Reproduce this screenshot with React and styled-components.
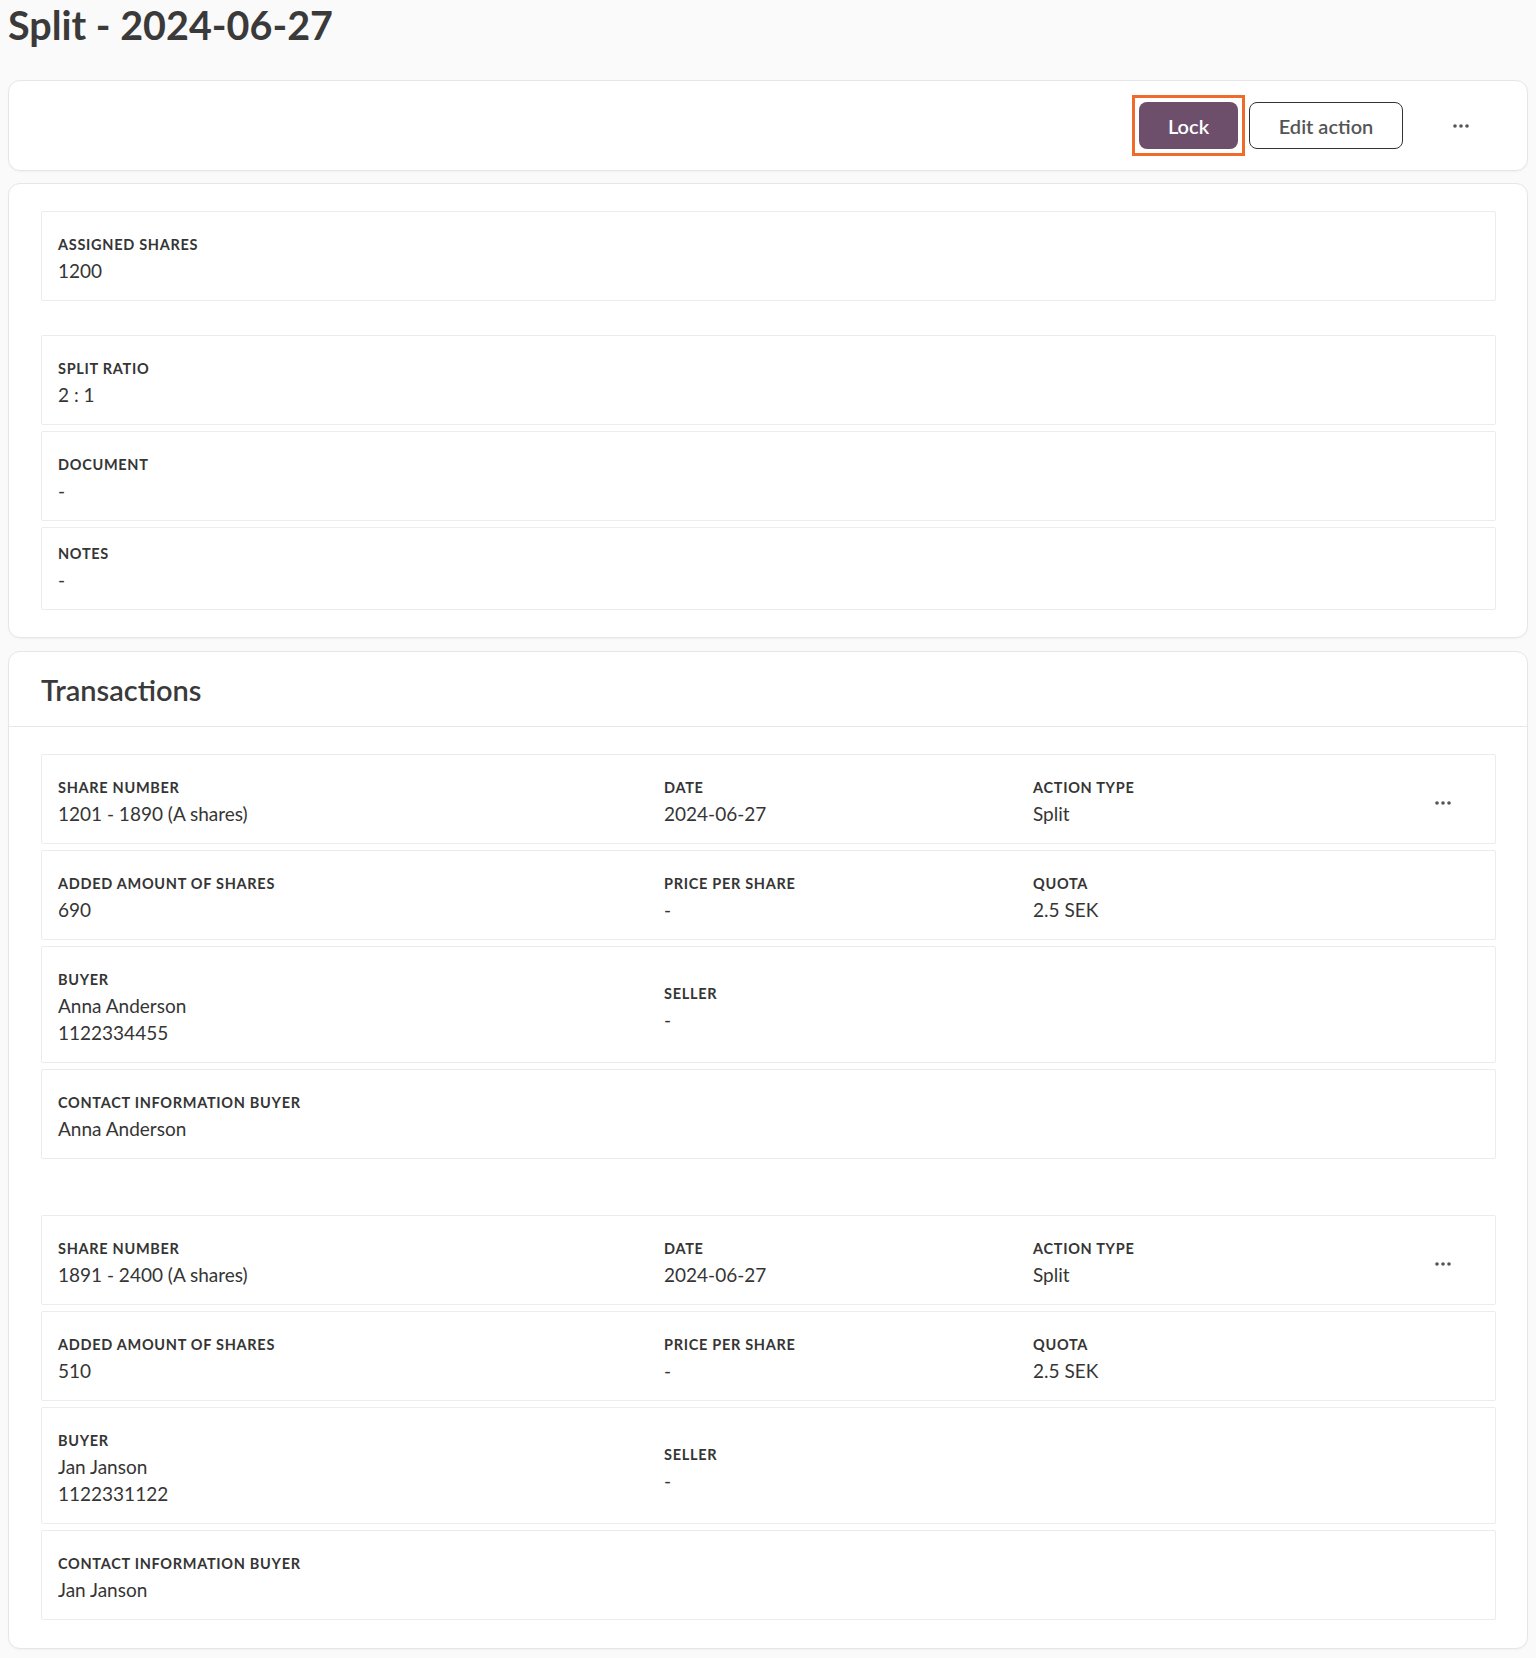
import React from "react";
import styled, { createGlobalStyle } from "styled-components";

const GlobalStyle = createGlobalStyle`
  body {
    margin: 0;
    background: #fafafa;
    font-family: Lato, "Open Sans", sans-serif;
    color: #353535;
  }
`;

const Page = styled.div`
  padding: 0 8px 4px 8px;
`;

const Title = styled.h1`
  margin: 0;
  padding-top: 1px;
  font-size: 39.5px;
  line-height: 48px;
  font-weight: 700;
  color: #3a3a3a;
`;

const Card = styled.div`
  background: #fff;
  border: 1px solid #e6e6e6;
  border-radius: 12px;
  box-shadow: 0 1px 2px rgba(0, 0, 0, 0.04);
  margin-top: ${props => props.gap || 12}px;
`;

const Toolbar = styled(Card)`
  height: 89px;
  display: flex;
  align-items: center;
  justify-content: flex-end;
  padding-right: 58px;
  margin-top: 31px;
`;

const Highlight = styled.div`
  border: 3px solid #f06a2a;
  padding: 4px;
  margin-right: 4px;
  display: flex;
`;

const Button = styled.button`
  height: 47px;
  border-radius: 8px;
  font-family: inherit;
  font-size: 20px;
  font-weight: 600;
  cursor: pointer;
  background: ${props => (props.primary ? "#6d4f6b" : "#fff")};
  color: ${props => (props.primary ? "#fff" : "#555")};
  border: ${props => (props.primary ? "none" : "1px solid #333")};
  width: ${props => props.w}px;
`;

const Dots = styled.button`
  background: none;
  border: none;
  padding: 0;
  width: ${props => props.w || 70}px;
  display: flex;
  justify-content: center;
  align-items: center;
  cursor: pointer;
  margin-left: ${props => props.ml || 0}px;
`;

const CardBody = styled.div`
  padding: ${props => props.pad || "27px 31px 27px 32px"};
  display: flex;
  flex-direction: column;
  gap: 6px;
`;

const Box = styled.div`
  border: 1px solid #ececec;
  border-radius: 2px;
  background: #fff;
  padding: ${props => (props.compact ? "17px" : "24px")} 17px 16px 16px;
  margin-top: ${props => props.spaced || 0}px;
`;

const Row = styled(Box)`
  display: grid;
  grid-template-columns: 606px 369px 1fr 70px;
  align-items: center;
`;

const Label = styled.div`
  font-size: 14.5px;
  line-height: 18px;
  font-weight: 700;
  letter-spacing: 0.7px;
  text-transform: uppercase;
  color: #353535;
`;

const Value = styled.div`
  margin-top: 3px;
  font-size: 19px;
  line-height: 27px;
  color: #353535;
`;

const CardHeader = styled.div`
  height: 74px;
  border-bottom: 1px solid #e6e6e6;
  display: flex;
  align-items: center;
  padding-left: 32px;
`;

const SectionTitle = styled.h2`
  margin: 0;
  font-size: 29px;
  font-weight: 600;
  color: #3a3a3a;
`;

const Group = styled.div`
  display: flex;
  flex-direction: column;
  gap: 6px;
  margin-top: ${props => props.gap || 0}px;
`;

const DotsIcon = () => (
  <svg width="16" height="4" viewBox="0 0 16 4">
    <circle cx="2" cy="2" r="1.8" fill="#555" />
    <circle cx="8" cy="2" r="1.8" fill="#555" />
    <circle cx="14" cy="2" r="1.8" fill="#555" />
  </svg>
);

const Field = ({ label, children }) => (
  <div>
    <Label>{label}</Label>
    <Value>{children}</Value>
  </div>
);

const transactions = [
  {
    shares: "1201 - 1890 (A shares)",
    amount: "690",
    buyer: "Anna Anderson",
    id: "1122334455",
  },
  {
    shares: "1891 - 2400 (A shares)",
    amount: "510",
    buyer: "Jan Janson",
    id: "1122331122",
  },
];

const Transaction = ({ t, gap }) => (
  <Group gap={gap}>
    <Row>
      <Field label="Share number">{t.shares}</Field>
      <Field label="Date">2024-06-27</Field>
      <Field label="Action type">Split</Field>
      <Dots>
        <DotsIcon />
      </Dots>
    </Row>
    <Row>
      <Field label="Added amount of shares">{t.amount}</Field>
      <Field label="Price per share">-</Field>
      <Field label="Quota">2.5 SEK</Field>
    </Row>
    <Row>
      <Field label="Buyer">
        {t.buyer}
        <br />
        {t.id}
      </Field>
      <Field label="Seller">-</Field>
    </Row>
    <Box>
      <Field label="Contact information buyer">{t.buyer}</Field>
    </Box>
  </Group>
);

export default function App() {
  return (
    <Page>
      <GlobalStyle />
      <Title>Split - 2024-06-27</Title>

      <Toolbar>
        <Highlight>
          <Button primary w={99}>
            Lock
          </Button>
        </Highlight>
        <Button w={154}>Edit action</Button>
        <Dots w={16} ml={50}>
          <DotsIcon />
        </Dots>
      </Toolbar>

      <Card>
        <CardBody>
          <Box>
            <Field label="Assigned shares">1200</Field>
          </Box>
          <Box spaced={28}>
            <Field label="Split ratio">2 : 1</Field>
          </Box>
          <Box>
            <Field label="Document">-</Field>
          </Box>
          <Box compact>
            <Field label="Notes">-</Field>
          </Box>
        </CardBody>
      </Card>

      <Card gap={13}>
        <CardHeader>
          <SectionTitle>Transactions</SectionTitle>
        </CardHeader>
        <CardBody pad="27px 31px 28px 32px">
          {transactions.map((t, i) => (
            <Transaction key={t.id} t={t} gap={i ? 50 : 0} />
          ))}
        </CardBody>
      </Card>
    </Page>
  );
}
